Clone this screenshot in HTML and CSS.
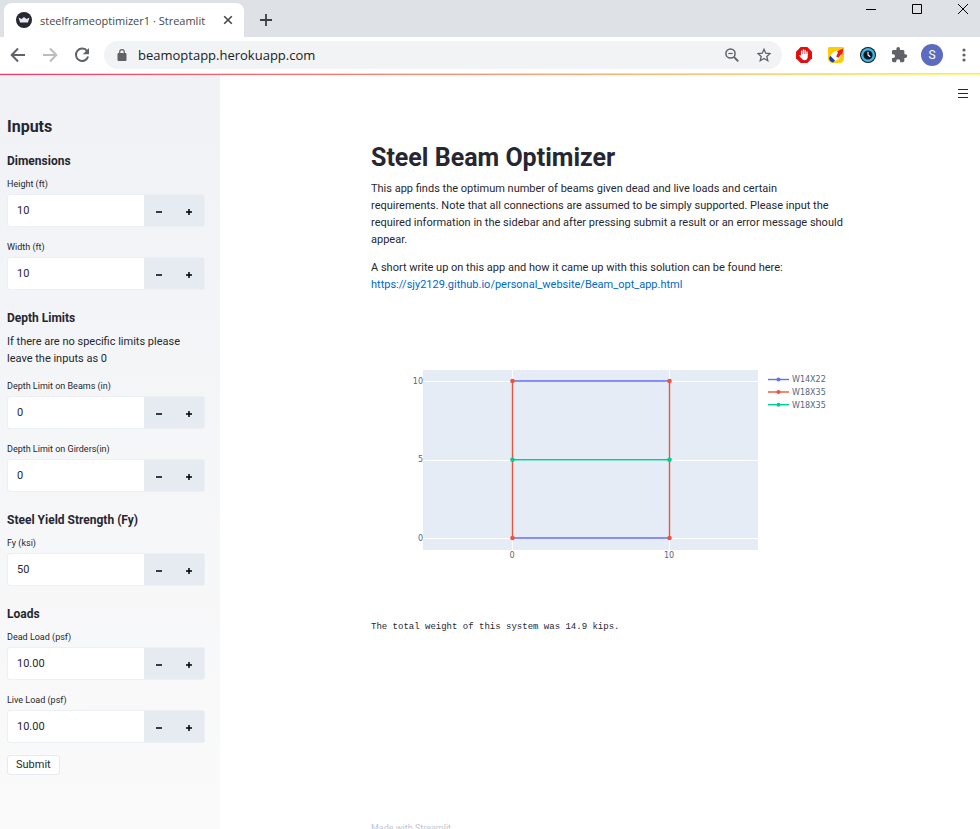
FILE: index.html
```html
<!DOCTYPE html>
<html lang="en">
<head>
<meta charset="utf-8">
<title>steelframeoptimizer1 · Streamlit</title>
<link rel="stylesheet" href="styles.css">
</head>
<body>
<header class="browser">
  <div class="tabstrip">
    <div class="tab">
      <svg class="favicon" width="16" height="16" viewBox="0 0 16 16" aria-hidden="true"><circle cx="8" cy="8" r="8" fill="#262730"/><path d="M2.500 5.600l3 1.500L8 5l2.500 2.100 3-1.500-1.600 5H4.100z" fill="#e8e8ec"/></svg>
      <span class="tab-title">steelframeoptimizer1 · Streamlit</span>
      <button class="plain" aria-label="Close tab"><svg width="10" height="10" viewBox="0 0 10 10"><path d="M1.200 1.200l7.600 7.600M8.800 1.200L1.200 8.800" stroke="#45494d" stroke-width="1.600"/></svg></button>
    </div>
    <button class="plain new-tab" aria-label="New tab"><svg width="12" height="12" viewBox="0 0 12 12"><path d="M6 0v12M0 6h12" stroke="#3c4043" stroke-width="1.800"/></svg></button>
    <div class="window-controls">
      <button class="plain" aria-label="Minimize"><svg width="10" height="10" viewBox="0 0 10 10"><path d="M0 5.500h10" stroke="#000"/></svg></button>
      <button class="plain" aria-label="Maximize"><svg width="10" height="10" viewBox="0 0 10 10"><path d="M.5.5h9v9h-9z" fill="none" stroke="#000"/></svg></button>
      <button class="plain" aria-label="Close"><svg width="10" height="10" viewBox="0 0 10 10"><path d="M0 0l10 10M10 0L0 10" stroke="#000"/></svg></button>
    </div>
  </div>
  <div class="toolbar">
    <div class="nav">
      <button class="plain" aria-label="Back"><svg width="16" height="16" viewBox="0 0 16 16"><path d="M15 8H2M8 1.500L1.700 8 8 14.500" fill="none" stroke="#5f6368" stroke-width="2"/></svg></button>
      <button class="plain" aria-label="Forward"><svg width="16" height="16" viewBox="0 0 16 16"><path d="M1 8h13M8 1.500L14.300 8 8 14.500" fill="none" stroke="#babcbe" stroke-width="2"/></svg></button>
      <button class="plain" aria-label="Reload"><svg width="16" height="16" viewBox="0 0 16 16"><path d="M13.200 4.200A6.200 6.200 0 1 0 14.100 9.500" fill="none" stroke="#5f6368" stroke-width="2"/><path d="M15 1v6.200H8.800z" fill="#5f6368"/></svg></button>
    </div>
    <div class="omnibox">
      <svg width="10" height="12" viewBox="0 0 10 12" aria-hidden="true"><path d="M1 4.500h8v7H1z" fill="#5f6368" stroke="#5f6368" stroke-linejoin="round"/><path d="M2.700 5V3a2.300 2.300 0 0 1 4.600 0v2" fill="none" stroke="#5f6368" stroke-width="1.200"/></svg>
      <input class="url" type="text" aria-label="Address" value="beamoptapp.herokuapp.com">
      <button class="plain" aria-label="Zoom"><svg width="14" height="14" viewBox="0 0 14 14"><circle cx="5.500" cy="5.500" r="4.600" fill="none" stroke="#5f6368" stroke-width="1.500"/><path d="M3.300 5.500h4.400" stroke="#5f6368" stroke-width="1.200"/><path d="M9 9l4.300 4.300" stroke="#5f6368" stroke-width="1.800"/></svg></button>
      <button class="plain" aria-label="Bookmark"><svg width="14" height="14" viewBox="0 0 14 14"><path d="M7 1.300l1.700 3.900 4.400.3-3.300 2.900 1 4.300L7 10.500l-3.800 2.200 1-4.300L.9 5.500l4.400-.3z" fill="none" stroke="#5f6368" stroke-width="1.300"/></svg></button>
    </div>
    <div class="extensions">
      <button class="plain" aria-label="Ad blocker"><svg width="16" height="16" viewBox="0 0 16 16"><path d="M4.700 0h6.600L16 4.700v6.600L11.300 16H4.700L0 11.300V4.700z" fill="#e40d0d"/><path d="M5.600 8V4.200M7.400 7V3M9.200 7V3.300M11 8V4.800" stroke="#fff" stroke-width="1.300" stroke-linecap="round"/><path d="M5 7h6.700v3c0 2-1.200 3.200-3 3.200-2 0-3-1.300-3.700-3.200z" fill="#fff"/><path d="M5.500 10.500L4 8.600" stroke="#fff" stroke-width="1.300" stroke-linecap="round"/></svg></button>
      <button class="plain" aria-label="Marker"><svg width="16" height="16" viewBox="0 0 16 16"><path d="M1 0h14l1 1v10c0 3-2 5-5 5H5c-3 0-5-2-5-5V1z" fill="#fc0"/><path d="M9.500 3.500C5 4.500 3 7 2 10l4.500 4c3-.5 5.500-2.500 6.500-6z" fill="#fff"/><path d="M15.300 1.500L9 4.200l1 1.300-1.800 4 2.300 1.300L13.300 7l1 .6z" fill="#e81c24"/><path d="M2.300 8.800l4.700 4.800-2 1.900C2.800 15 1.500 13.500 1 11.500z" fill="#1b3cba"/></svg></button>
      <button class="plain" aria-label="Clock"><svg width="16" height="16" viewBox="0 0 16 16"><circle cx="8" cy="8" r="8" fill="#0b1720"/><circle cx="8" cy="8" r="5.800" fill="none" stroke="#40b4e5" stroke-width="2.400"/><path d="M8 4.800V8l2.300 1.700" fill="none" stroke="#fff" stroke-width="1.100"/></svg></button>
      <button class="plain" aria-label="Extensions"><svg width="16" height="16" viewBox="2 1 22 22"><path d="M20.500 11H19V7a2 2 0 0 0-2-2h-4V3.500a2.500 2.500 0 0 0-5 0V5H4a2 2 0 0 0-2 2v3.800h1.500a2.700 2.700 0 0 1 0 5.400H2V20a2 2 0 0 0 2 2h3.800v-1.500a2.700 2.700 0 0 1 5.400 0V22H17a2 2 0 0 0 2-2v-4h1.500a2.500 2.500 0 0 0 0-5z" fill="#5f6368"/></svg></button>
      <button class="plain avatar" aria-label="Profile">S</button>
      <button class="plain more" aria-label="Menu"><svg width="4" height="14" viewBox="0 0 4 14"><g fill="#5f6368"><circle cx="2" cy="2" r="1.600"/><circle cx="2" cy="7" r="1.600"/><circle cx="2" cy="12" r="1.600"/></g></svg></button>
    </div>
  </div>
</header>
<div class="decoration"></div>
<div class="app">
  <aside class="sidebar">
    <h2>Inputs</h2>
    <h3>Dimensions</h3>
    <div class="field"><label for="height">Height (ft)</label><div class="number"><input id="height" type="number" value="10"><button aria-label="Decrease height"><svg width="6" height="6"><path d="M0 3h6"/></svg></button><button aria-label="Increase height"><svg width="6" height="6"><path d="M0 3h6M3 0v6"/></svg></button></div></div>
    <div class="field"><label for="width">Width (ft)</label><div class="number"><input id="width" type="number" value="10"><button aria-label="Decrease width"><svg width="6" height="6"><path d="M0 3h6"/></svg></button><button aria-label="Increase width"><svg width="6" height="6"><path d="M0 3h6M3 0v6"/></svg></button></div></div>
    <h3>Depth Limits</h3>
    <p>If there are no specific limits please leave the inputs as 0</p>
    <div class="field"><label for="beams">Depth Limit on Beams (in)</label><div class="number"><input id="beams" type="number" value="0"><button aria-label="Decrease beam depth"><svg width="6" height="6"><path d="M0 3h6"/></svg></button><button aria-label="Increase beam depth"><svg width="6" height="6"><path d="M0 3h6M3 0v6"/></svg></button></div></div>
    <div class="field"><label for="girders">Depth Limit on Girders(in)</label><div class="number"><input id="girders" type="number" value="0"><button aria-label="Decrease girder depth"><svg width="6" height="6"><path d="M0 3h6"/></svg></button><button aria-label="Increase girder depth"><svg width="6" height="6"><path d="M0 3h6M3 0v6"/></svg></button></div></div>
    <h3>Steel Yield Strength (Fy)</h3>
    <div class="field"><label for="fy">Fy (ksi)</label><div class="number"><input id="fy" type="number" value="50"><button aria-label="Decrease Fy"><svg width="6" height="6"><path d="M0 3h6"/></svg></button><button aria-label="Increase Fy"><svg width="6" height="6"><path d="M0 3h6M3 0v6"/></svg></button></div></div>
    <h3>Loads</h3>
    <div class="field"><label for="dead">Dead Load (psf)</label><div class="number"><input id="dead" type="number" step="0.01" value="10.00"><button aria-label="Decrease dead load"><svg width="6" height="6"><path d="M0 3h6"/></svg></button><button aria-label="Increase dead load"><svg width="6" height="6"><path d="M0 3h6M3 0v6"/></svg></button></div></div>
    <div class="field"><label for="live">Live Load (psf)</label><div class="number"><input id="live" type="number" step="0.01" value="10.00"><button aria-label="Decrease live load"><svg width="6" height="6"><path d="M0 3h6"/></svg></button><button aria-label="Increase live load"><svg width="6" height="6"><path d="M0 3h6M3 0v6"/></svg></button></div></div>
    <button class="submit">Submit</button>
  </aside>
  <main class="main">
    <button class="plain app-menu" aria-label="App menu"><svg width="10" height="9" viewBox="0 0 10 9"><path d="M0 .5h10M0 4.500h10M0 8.500h10" stroke="#262730"/></svg></button>
    <div class="content">
      <h1>Steel Beam Optimizer</h1>
      <p>This app finds the optimum number of beams given dead and live loads and certain<br>requirements. Note that all connections are assumed to be simply supported. Please input the required information in the sidebar and after pressing submit a result or an error message should appear.</p>
      <p>A short write up on this app and how it came up with this solution can be found here: <a href="#">https://sjy2129.github.io/personal_website/Beam_opt_app.html</a></p>
      <svg class="chart" viewBox="0 0 476 300" role="img" aria-label="Beam layout">
        <rect x="52" y="67" width="335" height="180" fill="#e5ecf6"/>
        <path d="M52 78.500h335M52 157.500h335M52 235.500h335M141.500 67v180M298.500 67v180" stroke="#fff"/>
        <g fill="none" stroke-width="1.400">
          <path d="M141.500 78h157M141.500 235h157" stroke="#636efa"/>
          <path d="M141.500 78v157M298.500 78v157" stroke="#ef553b"/>
          <path d="M141.500 156.700h157" stroke="#00cc96"/>
          <path d="M397 76.500h21" stroke="#636efa"/>
          <path d="M397 89h21" stroke="#ef553b"/>
          <path d="M397 101.700h21" stroke="#00cc96"/>
        </g>
        <g fill="#ef553b"><circle cx="141.500" cy="78" r="2.300"/><circle cx="298.500" cy="78" r="2.300"/><circle cx="141.500" cy="235" r="2.300"/><circle cx="298.500" cy="235" r="2.300"/><circle cx="407.500" cy="89" r="2"/></g>
        <g fill="#00cc96"><circle cx="141.500" cy="156.700" r="2.300"/><circle cx="298.500" cy="156.700" r="2.300"/><circle cx="407.500" cy="101.700" r="2"/></g>
        <circle cx="407.500" cy="76.500" r="2" fill="#636efa"/>
        <g class="ticks">
          <g text-anchor="end"><text x="52" y="81">10</text><text x="52" y="159">5</text><text x="52" y="238">0</text></g>
          <g text-anchor="middle"><text x="141" y="255">0</text><text x="298" y="255">10</text></g>
          <text x="421" y="79">W14X22</text><text x="421" y="92">W18X35</text><text x="421" y="105">W18X35</text>
        </g>
      </svg>
      <pre>The total weight of this system was 14.9 kips.</pre>
      <footer>Made with Streamlit</footer>
    </div>
  </main>
</div>
</body>
</html>
```
FILE: styles.css
```css
* { box-sizing: border-box; }
body {
  margin: 0;
  height: 100vh;
  display: flex;
  flex-direction: column;
  overflow: hidden;
  background: #fff;
  color: #262730;
  font: 11px/17px Roboto, sans-serif;
}
h1, h2, h3, p, pre { margin: 0; }
button, input { font: inherit; color: inherit; }
button { cursor: pointer; }
svg { flex: none; display: block; }
.plain { border: 0; padding: 0; background: none; display: flex; align-items: center; justify-content: center; }

.browser { flex: none; font-family: "Open Sans", sans-serif; }
.tabstrip { display: flex; background: #dee1e6; height: 37px; padding-left: 4px; }
.tab {
  display: flex;
  align-items: center;
  gap: 8px;
  width: 240px;
  margin-top: 3px;
  padding: 0 11px 0 12px;
  border-radius: 8px 8px 0 0;
  background: #fff;
  color: #45494d;
  font-size: 11px;
}
.tab-title { flex: 1; white-space: nowrap; }
.new-tab { width: 28px; height: 40px; margin-left: 8px; }
.window-controls { display: flex; gap: 36px; height: 18px; margin-left: auto; padding-right: 12px; }
.toolbar { display: flex; align-items: center; height: 37px; padding: 0 12px 0 10px; border-bottom: 1px solid #dcdee0; }
.nav { display: flex; gap: 16px; margin-right: 14px; }
.omnibox { flex: 1; min-width: 0; display: flex; align-items: center; gap: 18px; height: 28px; padding: 0 11px 0 13px; border-radius: 14px; background: #f1f3f4; }
.url { flex: 1; min-width: 0; margin-left: -7px; padding: 0; border: 0; background: none; font-size: 13px; color: #202124; }
.extensions { display: flex; align-items: center; gap: 16px; margin-left: 14px; }
.avatar { width: 22px; height: 22px; margin: 0 -3px; border-radius: 50%; background: #5c6bc0; color: #fff; font: 12px Roboto, sans-serif; }
.more { width: 8px; margin-left: 4px; }

.decoration { flex: none; height: 1px; background: linear-gradient(90deg, #f63366, #fffd80); }
.app { flex: 1; min-height: 0; display: flex; }
.sidebar { flex: none; width: 220px; padding: 42px 15px 0 7px; background: linear-gradient(#f0f2f6, #fafafa); overflow: hidden; }
h1, h2, h3 { font-family: Roboto, sans-serif; font-weight: 700; }
h2 { font-size: 16px; line-height: 20px; margin-bottom: 15px; }
h3 { font-size: 12px; line-height: 18px; margin-bottom: 6px; }
.field + h3 { margin-top: 19px; }
.field + .field { margin-top: 12px; }
p + .field { margin-top: 11px; }
.field label { display: block; font-size: 9px; line-height: 16px; margin-bottom: 2px; }
.number { display: flex; height: 33px; border: 1px solid #eceff4; border-radius: 3px; background: #e6eaf1; overflow: hidden; }
.number input { flex: 1; min-width: 0; border: 0; padding: 0 9px; background: #fff; appearance: textfield; }
.number input::-webkit-inner-spin-button { appearance: none; margin: 0; }
.number button { width: 30px; border: 0; padding: 2px 0 0; background: #e6eaf1; display: flex; align-items: center; justify-content: center; }
.number path { stroke: #000; stroke-width: 1.5px; }
.submit { height: 20px; margin-top: 12px; padding: 0 8px; border: 1px solid #e6eaf1; border-radius: 3px; background: #fff; line-height: 16px; }

.main { flex: 1; min-width: 0; position: relative; overflow: hidden; display: grid; grid-template-columns: 151fr 476fr 133fr; padding-top: 67px; }
.content { grid-column: 2; min-width: 0; }
.app-menu { position: absolute; top: 9px; right: 8px; width: 18px; height: 18px; }
h1 { font-size: 25px; line-height: 32px; margin-bottom: 6px; }
.content p + p { margin-top: 11px; }
a { color: #0068c9; text-decoration: none; }
.chart { width: 100%; height: auto; margin-top: 10px; }
.ticks { font: 8px "DejaVu Sans", sans-serif; fill: #506784; }
pre { margin-top: 16px; font: 9px/16px "Liberation Mono", monospace; }
footer { margin-top: 184px; color: #c3c6d2; font-size: 9px; line-height: 18px; }
```
